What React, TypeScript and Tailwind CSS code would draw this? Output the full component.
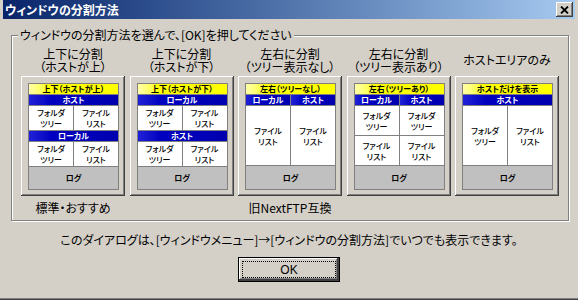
import React from "react";

const Yel = ({ children }: { children: React.ReactNode }) => (
  <div className="h-[10px] flex items-center justify-center bg-linear-to-r from-[#ffffa8] via-[#ffff00] via-20% to-[#ffff00] text-[8px] font-bold leading-none text-black whitespace-nowrap">
    {children}
  </div>
);

const Blu = ({ children }: { children: React.ReactNode }) => (
  <div className="h-[10px] flex items-center justify-center bg-linear-to-r from-[#2020d8] via-[#0000c0] via-25% to-[#0000b0] text-[8px] font-bold leading-none text-white whitespace-nowrap">
    {children}
  </div>
);

const Cell = ({ a, b }: { a: string; b: string }) => (
  <div className="bg-white flex flex-col items-center justify-center text-[8px] font-medium leading-[11px] text-black">
    <span>{a}</span>
    <span>{b}</span>
  </div>
);

const Row = ({ a, b, c, d, h }: { a: string; b: string; c: string; d: string; h: string }) => (
  <div className={`grid grid-cols-2 gap-px ${h}`}>
    <Cell a={a} b={b} />
    <Cell a={c} b={d} />
  </div>
);

const Log = () => (
  <div className="flex-1 bg-[#c0c0c0] flex items-center justify-center text-[8px] font-bold leading-none text-black">
    ログ
  </div>
);

const Card = ({ children }: { children: React.ReactNode }) => (
  <div className="w-[104px] h-[120px] bg-[#d4d0c8] pt-[7px] pl-[7px] pr-[6px] pb-[6px] shadow-[inset_-1px_-1px_0_#404040,inset_1px_1px_0_#ffffff,inset_-2px_-2px_0_#808080,inset_2px_2px_0_#d4d0c8]">
    <div className="h-full flex flex-col gap-px bg-[#808080] border border-[#808080]">{children}</div>
  </div>
);

const Column = ({
  title,
  card,
  footer,
}: {
  title: React.ReactNode;
  card: React.ReactNode;
  footer?: string;
}) => (
  <div className="w-[104px] flex flex-col items-center">
    <div className="h-[27px] -mt-[1px] mb-[3px] flex flex-col items-center justify-center text-[12px] leading-[13px] text-black text-center whitespace-nowrap">
      {title}
    </div>
    {card}
    <div className="mt-[5px] h-[14px] text-[12px] leading-[14px] text-black whitespace-nowrap">{footer ?? ""}</div>
  </div>
);

export default function App() {
  return (
    <div className="w-[578px] h-[300px] bg-[#d4d0c8] font-['Noto_Sans_CJK_JP','Noto_Sans',sans-serif] [font-feature-settings:'palt'] flex flex-col px-[3px] shadow-[inset_0_-1px_0_#404040,inset_0_-2px_0_#808080] overflow-hidden">
      {/* Title bar */}
      <div className="h-[19px] shrink-0 bg-linear-to-r from-[#0a246a] to-[#a6caf0] flex items-center justify-between pl-[2px] pr-[2px]">
        <span className="text-white text-[12px] font-bold leading-none whitespace-nowrap">ウィンドウの分割方法</span>
        <div className="w-[17px] h-[15px] bg-[#d4d0c8] flex items-center justify-center shadow-[inset_-1px_-1px_0_#404040,inset_1px_1px_0_#ffffff,inset_-2px_-2px_0_#808080]">
          <svg width="9" height="8" viewBox="0 0 9 8">
            <path d="M1 0.5 L8 7.5 M8 0.5 L1 7.5" stroke="#000" strokeWidth="1.8" />
          </svg>
        </div>
      </div>

      {/* Group box */}
      <div className="relative mt-[16px] ml-[8px] w-[558px] h-[186px] shrink-0 border border-[#808080] shadow-[inset_1px_1px_0_#ffffff,1px_1px_0_#ffffff]">
        <span className="absolute -top-[8px] left-[6px] px-[2px] bg-[#d4d0c8] text-[12px] leading-[14px] text-black whitespace-nowrap">
          ウィンドウの分割方法を選んで、[OK]を押してください
        </span>
        <div className="flex justify-between pt-[11px] px-[9px]">
          <Column
            title={
              <>
                <span>上下に分割</span>
                <span>（ホストが上）</span>
              </>
            }
            footer="標準・おすすめ"
            card={
              <Card>
                <Yel>上下（ホストが上）</Yel>
                <Blu>ホスト</Blu>
                <Row h="h-[24px]" a="フォルダ" b="ツリー" c="ファイル" d="リスト" />
                <Blu>ローカル</Blu>
                <Row h="h-[24px]" a="フォルダ" b="ツリー" c="ファイル" d="リスト" />
                <Log />
              </Card>
            }
          />
          <Column
            title={
              <>
                <span>上下に分割</span>
                <span>（ホストが下）</span>
              </>
            }
            card={
              <Card>
                <Yel>上下（ホストが下）</Yel>
                <Blu>ローカル</Blu>
                <Row h="h-[24px]" a="フォルダ" b="ツリー" c="ファイル" d="リスト" />
                <Blu>ホスト</Blu>
                <Row h="h-[24px]" a="フォルダ" b="ツリー" c="ファイル" d="リスト" />
                <Log />
              </Card>
            }
          />
          <Column
            title={
              <>
                <span>左右に分割</span>
                <span>（ツリー表示なし）</span>
              </>
            }
            footer="旧NextFTP互換"
            card={
              <Card>
                <Yel>左右（ツリーなし）</Yel>
                <div className="grid grid-cols-2 gap-px">
                  <Blu>ローカル</Blu>
                  <Blu>ホスト</Blu>
                </div>
                <Row h="h-[59px]" a="ファイル" b="リスト" c="ファイル" d="リスト" />
                <Log />
              </Card>
            }
          />
          <Column
            title={
              <>
                <span>左右に分割</span>
                <span>（ツリー表示あり）</span>
              </>
            }
            card={
              <Card>
                <Yel>左右（ツリーあり）</Yel>
                <div className="grid grid-cols-2 gap-px">
                  <Blu>ローカル</Blu>
                  <Blu>ホスト</Blu>
                </div>
                <Row h="h-[29px]" a="フォルダ" b="ツリー" c="フォルダ" d="ツリー" />
                <Row h="h-[29px]" a="ファイル" b="リスト" c="ファイル" d="リスト" />
                <Log />
              </Card>
            }
          />
          <Column
            title={<span>ホストエリアのみ</span>}
            card={
              <Card>
                <Yel>ホストだけを表示</Yel>
                <Blu>ホスト</Blu>
                <Row h="h-[59px]" a="フォルダ" b="ツリー" c="ファイル" d="リスト" />
                <Log />
              </Card>
            }
          />
        </div>
      </div>

      {/* Message */}
      <div className="mt-[12px] text-center text-[12px] leading-[14px] text-black whitespace-nowrap">
        このダイアログは、[ウィンドウメニュー]→[ウィンドウの分割方法]でいつでも表示できます。
      </div>

      {/* OK button */}
      <div className="mt-[10px] flex justify-center">
        <div className="w-[102px] h-[25px] bg-[#d4d0c8] border border-black p-[1px] shadow-[inset_-2px_-2px_0_#404040,inset_1px_1px_0_#ffffff,inset_-3px_-3px_0_#808080]">
          <div className="w-full h-full p-[2px]">
            <div className="w-full h-full border border-dotted border-black flex items-center justify-center text-[12px] leading-none text-black font-['Liberation_Sans',sans-serif]">
              OK
            </div>
          </div>
        </div>
      </div>
    </div>
  );
}
